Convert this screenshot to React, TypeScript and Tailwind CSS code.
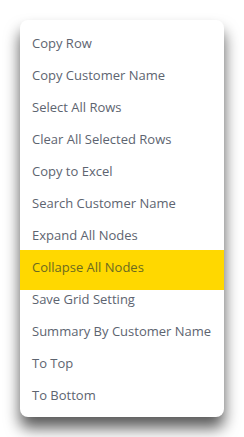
import React from "react";

const items = [
  "Copy Row",
  "Copy Customer Name",
  "Select All Rows",
  "Clear All Selected Rows",
  "Copy to Excel",
  "Search Customer Name",
  "Expand All Nodes",
  "Collapse All Nodes",
  "Save Grid Setting",
  "Summary By Customer Name",
  "To Top",
  "To Bottom",
];

export default function App() {
  return (
    <div className="w-[244px] h-[437px] bg-white pt-[20px] pl-[20px]" style={{ fontFamily: '"Open Sans", "Noto Sans", sans-serif' }}>
      <div className="w-[204px] h-[397px] bg-white rounded-[8px] pt-[8px] pb-[5px] shadow-[0_11px_15px_rgba(0,0,0,0.65)]">
        {items.map((t, i) =>
          i === 7 ? (
            <div key={t} className="h-[40px] -mt-[2px] -mb-[6px] pt-[2px] bg-[#ffd800] pl-[12px] text-[13px] text-[#6b6a20]">
              <div className="h-[32px] flex items-center">{t}</div>
            </div>
          ) : (
            <div key={t} className="h-[32px] flex items-center pl-[12px] text-[13px] text-[#5d6470] relative">
              {t}
            </div>
          )
        )}
      </div>
    </div>
  );
}
